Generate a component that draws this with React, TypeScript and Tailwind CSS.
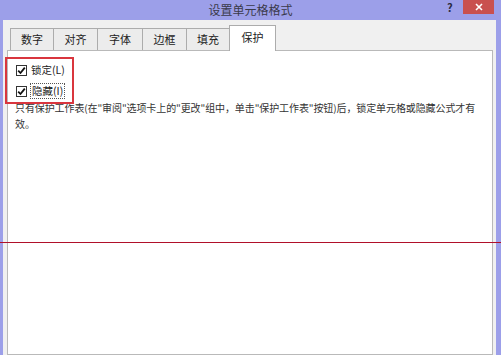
import React from "react";

const font = { fontFamily: '"Microsoft YaHei","Noto Sans CJK SC","Noto Sans",sans-serif' };

function Check() {
  return (
    <span className="flex h-[11px] w-[11px] items-center justify-center border border-[#333] bg-white">
      <svg width="9" height="9" viewBox="0 0 9 9">
        <path d="M1.2 4.6 L3.5 7 L7.8 1.6" fill="none" stroke="#111" strokeWidth="1.8" />
      </svg>
    </span>
  );
}

export default function App() {
  const tabs = [
    { t: "数字", w: 43 },
    { t: "对齐", w: 44 },
    { t: "字体", w: 45 },
    { t: "边框", w: 44 },
    { t: "填充", w: 43 },
  ];
  return (
    <div className="relative h-[355px] w-[501px] overflow-hidden bg-[#9c9fe9]" style={font}>
      {/* title bar */}
      <div className="relative flex h-[20px] items-center justify-center">
        <span className="text-[12px] leading-none text-[#3a3a4a]">设置单元格格式</span>
        <span className="absolute left-[447px] top-[2px] text-[11px] font-bold leading-none text-[#2a2a40]">?</span>
        <div className="absolute left-[463px] top-0 flex h-[14px] w-[31px] items-center justify-center bg-[#c9504f]">
          <svg width="8" height="8" viewBox="0 0 8 8">
            <path d="M1 1 L7 7 M7 1 L1 7" stroke="#fff" strokeWidth="1.6" />
          </svg>
        </div>
      </div>
      {/* body */}
      <div className="mx-[3px] mr-[5px] flex h-[335px] flex-col bg-[#f0f0f0] pl-[4px] pr-[3px]">
        {/* tabs */}
        <div className="flex h-[30px] items-end pl-[3px]">
          {tabs.map((x) => (
            <div
              key={x.t}
              className="flex h-[22px] items-center justify-center border border-b-0 border-r-0 border-[#acacac] bg-[#ececec] text-[11px] text-[#222]"
              style={{ width: x.w }}
            >
              {x.t}
            </div>
          ))}
          <div className="relative z-10 -mb-px flex h-[26px] w-[47px] items-center justify-center border border-b-0 border-[#acacac] bg-white pb-[2px] text-[11px] text-[#222]">
            保护
          </div>
        </div>
        {/* panel */}
        <div className="flex-1 border border-[#b9b9b9] bg-white pl-[7px] pt-[13px] text-[#222]">
          <div className="flex h-[12px] items-center gap-[4px] pl-[1px]">
            <Check />
            <span className="text-[10.5px] leading-none">锁定(L)</span>
          </div>
          <div className="mt-[9px] flex h-[12px] items-center gap-[3px] pl-[1px]">
            <Check />
            <span className="border border-dotted border-[#555] px-[1px] py-[2px] text-[10.5px] leading-none">隐藏(I)</span>
          </div>
          <p className="mt-[3px] w-[464px] text-[10px] leading-[16px] tracking-[-0.1px] text-[#333]">
            只有保护工作表(在"审阅"选项卡上的"更改"组中，单击"保护工作表"按钮)后，锁定单元格或隐藏公式才有效。
          </p>
        </div>
      </div>
      {/* annotations */}
      <div className="pointer-events-none absolute left-[5px] top-[57px] h-[47px] w-[69px] border-2 border-[#d9363e]" />
      <div className="pointer-events-none absolute left-0 top-[242px] h-[1px] w-[501px] bg-[#b0102a]" />
    </div>
  );
}
